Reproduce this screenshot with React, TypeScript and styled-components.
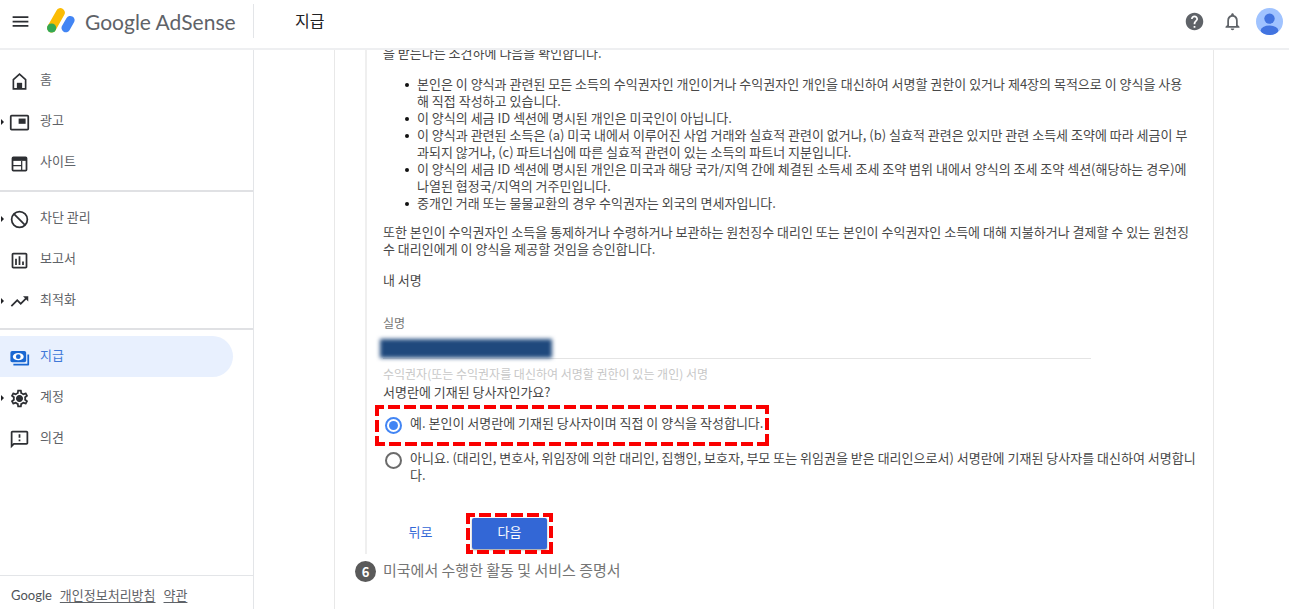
import React, { useState } from "react";
import styled, { createGlobalStyle } from "styled-components";
import {
  MdHelp,
  MdMenu,
  MdNotificationsNone,
  MdOutlineAssessment,
  MdOutlineFeedback,
  MdOutlineSettings,
  MdTrendingUp,
} from "react-icons/md";

const GlobalStyle = createGlobalStyle`
  *, *::before, *::after { box-sizing: border-box; }
  body {
    margin: 0;
    background: #fff;
    color: #484848;
    font: 13px/17px "Noto Sans CJK KR", Roboto, sans-serif;
  }
  button, input { font: inherit; }
  p, ul { margin: 0; }
`;

const Shell = styled.div`
  display: flex;
  flex-direction: column;
  height: 100vh;
`;

/* Top bar */

const Header = styled.header`
  display: flex;
  flex: none;
  height: 50px;
  border-bottom: 2px solid #eeeff1;
`;

const Brand = styled.div`
  display: flex;
  align-items: center;
  flex: none;
  width: 254px;
  height: 34px;
  margin-top: 4px;
  padding-left: 10px;
  border-right: 1px solid #e3e5e8;
`;

const IconButton = styled.button`
  display: flex;
  padding: 0;
  border: 0;
  background: none;
  color: ${(p) => p.color || "#5f6368"};
  cursor: pointer;
`;

const BrandLink = styled.a`
  display: flex;
  align-items: center;
  gap: 9px;
  margin-left: 15px;
  color: #5f6368;
  font: 21px/28px Lato, sans-serif;
  text-decoration: none;
  white-space: nowrap;
  span {
    padding-top: 2px;
  }
`;

const PageTitle = styled.h1`
  flex: 1;
  margin: 0;
  padding: 8px 0 0 41px;
  color: #202124;
  font-size: 16px;
  font-weight: 400;
  line-height: 24px;
`;

const HeaderActions = styled.div`
  display: flex;
  align-items: center;
  gap: 13px;
  height: 42px;
  padding-right: 6px;
`;

const ActionIcons = styled.div`
  display: flex;
  gap: 17px;
`;

/* Side navigation */

const Body = styled.div`
  display: flex;
  flex: 1;
  min-height: 0;
`;

const Sidebar = styled.aside`
  display: flex;
  flex-direction: column;
  flex: none;
  width: 254px;
  border-right: 1px solid #e3e5e8;
`;

const Nav = styled.nav`
  flex: 1;
  padding-top: 4px;
`;

const NavGroup = styled.div`
  padding: 6px 0 7px;
  & + & {
    border-top: 2px solid #e0e1e4;
  }
`;

const NavItem = styled.a<{ $active?: boolean }>`
  display: flex;
  align-items: center;
  height: 41px;
  margin-right: 20px;
  padding-bottom: 4px;
  border-radius: 0 21px 21px 0;
  background: ${(p) => (p.$active ? "#e8f0fe" : "transparent")};
  color: ${(p) => (p.$active ? "#3f78d8" : "#5f6368")};
  text-decoration: none;

  svg {
    flex: none;
    margin: 6px 10px 0 0;
    color: ${(p) => (p.$active ? "#1967d2" : "#2d2f33")};
  }
`;

const Caret = styled.span<{ $shown?: boolean }>`
  width: 9px;
  padding-left: 1px;
  &::before {
    content: "";
    display: ${(p) => (p.$shown ? "block" : "none")};
    width: 0;
    margin-top: 4px;
    border: solid transparent;
    border-width: 3px 0 3px 3px;
    border-left-color: #202124;
  }
`;

const SidebarFooter = styled.footer`
  display: flex;
  align-items: center;
  gap: 8px;
  height: 34px;
  padding: 3px 0 0 11px;
  border-top: 1px solid #e3e5e8;
  a {
    color: #5f6368;
    text-underline-offset: 2px;
  }
`;

const FooterBrand = styled.span`
  padding-top: 2px;
  color: #4f5358;
  font: 13px/17px Lato, sans-serif;
`;

/* Tax form */

const Main = styled.main`
  display: flex;
  flex: 1;
  min-width: 0;
  padding: 0 75px 0 80px;
  overflow: hidden;
`;

const Card = styled.section`
  flex: 1;
  padding: 0 22px 0 20px;
  border: solid #e8e8e8;
  border-width: 0 1px;
`;

const StepBody = styled.div`
  margin: -6px 0 0 10px;
  padding-left: 16px;
  border-left: 2px solid #efefef;
`;

const Paragraph = styled.p`
  margin-bottom: 14px;
`;

const Terms = styled.ul`
  margin-bottom: 12px;
  padding-left: 22px;
  list-style: none;
  li {
    display: flex;
    gap: 8px;
  }
  li::before {
    content: "";
    flex: none;
    width: 4px;
    height: 4px;
    margin-top: 8px;
    border-radius: 50%;
    background: #111;
  }
`;

const Field = styled.div`
  position: relative;
  display: flex;
  flex-direction: column;
  padding-top: 13px;
  font-size: 12px;
  line-height: 16px;
`;

const FieldLabel = styled.label`
  color: #757575;
`;

const TextInput = styled.input`
  width: calc(100% - 100px);
  height: 28px;
  padding: 6px 0 4px;
  border: 0;
  border-bottom: 1px solid #e4e4e4;
  outline: 0;
  background: none;
`;

const Redaction = styled.span`
  position: absolute;
  top: 37px;
  left: -3px;
  width: 172px;
  height: 19px;
  background: #1f497d;
  filter: blur(2px);
`;

const Hint = styled.p`
  margin: 7px 0 1px;
  color: #c8c8c8;
`;

const Options = styled.fieldset`
  display: grid;
  gap: 15px;
  min-width: 0;
  margin: 0 -8px 0 0;
  padding: 0;
  border: 0;
  legend {
    padding: 0 0 14px;
  }
`;

const Option = styled.label`
  position: relative;
  display: flex;
  align-items: flex-start;
  gap: 8px;
  padding-left: 2px;
`;

const Radio = styled.input`
  flex: none;
  display: grid;
  place-items: center;
  width: 17px;
  height: 17px;
  margin: 3px 0 0;
  appearance: none;
  border: 2px solid #6b6b6b;
  border-radius: 50%;
  &:checked {
    border-color: #4285f4;
  }
  &:checked::before {
    content: "";
    width: 9px;
    height: 9px;
    border-radius: 50%;
    background: #4285f4;
  }
`;

const Actions = styled.div`
  display: flex;
  align-items: center;
  gap: 14px;
  padding: 35px 0 5px;
`;

const Action = styled.button<{ $primary?: boolean }>`
  width: 75px;
  height: 31px;
  padding: 0 0 4px;
  border: 0;
  border-radius: 2px;
  background: ${(p) => (p.$primary ? "#3367d6" : "transparent")};
  box-shadow: ${(p) => (p.$primary ? "0 1px 2px rgba(0, 0, 0, 0.4)" : "none")};
  color: ${(p) => (p.$primary ? "#fff" : "#3367d6")};
  cursor: pointer;
`;

const Highlighted = styled.span`
  position: relative;
  display: flex;
`;

const Outline = styled.svg<{ $w: number; $h: number; $x: number; $y: number }>`
  position: absolute;
  left: ${(p) => p.$x}px;
  top: ${(p) => p.$y}px;
  width: ${(p) => p.$w}px;
  height: ${(p) => p.$h}px;
  pointer-events: none;
`;

const StepHeading = styled.h2`
  display: flex;
  gap: 7px;
  margin: 7px 0 0;
  color: #757575;
  font-size: 15px;
  font-weight: 400;
  line-height: 18px;
`;

const StepNumber = styled.span`
  width: 21px;
  height: 21px;
  border-radius: 50%;
  background: #5a5a5a;
  color: #fff;
  font-size: 13px;
  font-weight: 700;
  line-height: 21px;
  text-align: center;
`;

function DashedOutline({ w, h, x, y }: { w: number; h: number; x: number; y: number }) {
  return (
    <Outline $w={w} $h={h} $x={x} $y={y} aria-hidden="true">
      <path d={`M2 ${h - 2}V2`} fill="none" stroke="#fa0000" strokeWidth="4" strokeDasharray="12 4" strokeDashoffset="4" />
      <path d={`M0 2H${w}`} fill="none" stroke="#fa0000" strokeWidth="4" strokeDasharray="12 4" strokeDashoffset="3" />
      <path d={`M${w - 2} 0V${h}`} fill="none" stroke="#fa0000" strokeWidth="4" strokeDasharray="12 4" strokeDashoffset="3" />
      <path d={`M${w} ${h - 2}H0`} fill="none" stroke="#fa0000" strokeWidth="4" strokeDasharray="12 4" />
    </Outline>
  );
}

const AdSenseLogo = () => (
  <svg width="30" height="28" viewBox="0 0 30 28" aria-hidden="true" fill="none" strokeLinecap="round">
    <path d="M24.3 13.2 19.8 21" stroke="#4285f4" strokeWidth="8.6" />
    <path d="M14.4 5.6 5.7 21" stroke="#fbbc04" strokeWidth="9" />
    <circle cx="5.6" cy="21" r="4.6" fill="#34a853" />
  </svg>
);

const HomeIcon = () => (
  <svg width="21" height="21" viewBox="0 0 24 24" aria-hidden="true">
    <path d="M5 20.5V9.8l7-6.3 7 6.3v10.7Z" fill="none" stroke="currentColor" strokeWidth="1.9" />
    <path d="M9 20.5v-7h6v7Z" fill="currentColor" />
  </svg>
);

const AdsIcon = () => (
  <svg width="21" height="21" viewBox="0 0 24 24" aria-hidden="true">
    <rect x="2" y="4" width="20" height="16" rx="1" fill="none" stroke="currentColor" strokeWidth="2" />
    <path d="M11 7.5h8v6h-8Z" fill="currentColor" />
  </svg>
);

const SitesIcon = () => (
  <svg width="21" height="21" viewBox="0 0 24 24" aria-hidden="true">
    <rect x="4" y="5" width="16" height="15" rx="1" fill="none" stroke="currentColor" strokeWidth="2" />
    <path d="M4 5h16v4H4Z" fill="currentColor" />
    <path d="M4 14.5h10M14.5 9v11" stroke="currentColor" strokeWidth="1.4" />
  </svg>
);

const BlockIcon = () => (
  <svg width="21" height="21" viewBox="0 0 24 24" aria-hidden="true">
    <circle cx="12" cy="12" r="9" fill="none" stroke="currentColor" strokeWidth="2" />
    <path d="m5.6 5.6 12.8 12.8" stroke="currentColor" strokeWidth="2" />
  </svg>
);

const PaymentsIcon = () => (
  <svg width="21" height="21" viewBox="0 0 24 24" aria-hidden="true">
    <path d="M22 8.5v11.6H5" fill="none" stroke="currentColor" strokeWidth="2" strokeLinejoin="round" />
    <rect x="1.6" y="4.5" width="18" height="13" rx="2" fill="currentColor" />
    <ellipse cx="10.6" cy="11" rx="6.2" ry="4.1" fill="#fff" />
    <circle cx="10.6" cy="11" r="2.7" fill="currentColor" />
  </svg>
);

const SettingsIcon = () => (
  <svg width="21" height="21" viewBox="0 0 24 24" aria-hidden="true">
    <MdOutlineSettings size={24} style={{ margin: 0 }} />
    <circle cx="12" cy="12" r="3.4" fill="currentColor" />
  </svg>
);

const Avatar = () => (
  <svg width="27" height="27" viewBox="0 0 27 27" aria-hidden="true">
    <defs>
      <clipPath id="avatar-clip">
        <circle cx="13.5" cy="13.5" r="13.5" />
      </clipPath>
    </defs>
    <g clipPath="url(#avatar-clip)">
      <rect width="27" height="27" fill="#a0c3ff" />
      <circle cx="13.5" cy="10.6" r="5.2" fill="#4274e0" />
      <ellipse cx="13.5" cy="22.6" rx="8.8" ry="5" fill="#4274e0" />
    </g>
  </svg>
);

type Entry = { label: string; icon: React.ReactNode; expandable?: boolean; active?: boolean };

const navigation: Entry[][] = [
  [
    { label: "홈", icon: <HomeIcon /> },
    { label: "광고", icon: <AdsIcon />, expandable: true },
    { label: "사이트", icon: <SitesIcon /> },
  ],
  [
    { label: "차단 관리", icon: <BlockIcon />, expandable: true },
    { label: "보고서", icon: <MdOutlineAssessment size={21} /> },
    { label: "최적화", icon: <MdTrendingUp size={21} />, expandable: true },
  ],
  [
    { label: "지급", icon: <PaymentsIcon />, active: true },
    { label: "계정", icon: <SettingsIcon />, expandable: true },
    { label: "의견", icon: <MdOutlineFeedback size={21} /> },
  ],
];

const terms = [
  "본인은 이 양식과 관련된 모든 소득의 수익권자인 개인이거나 수익권자인 개인을 대신하여 서명할 권한이 있거나 제4장의 목적으로 이 양식을 사용해 직접 작성하고 있습니다.",
  "이 양식의 세금 ID 섹션에 명시된 개인은 미국인이 아닙니다.",
  "이 양식과 관련된 소득은 (a) 미국 내에서 이루어진 사업 거래와 실효적 관련이 없거나, (b) 실효적 관련은 있지만 관련 소득세 조약에 따라 세금이 부과되지 않거나, (c) 파트너십에 따른 실효적 관련이 있는 소득의 파트너 지분입니다.",
  "이 양식의 세금 ID 섹션에 명시된 개인은 미국과 해당 국가/지역 간에 체결된 소득세 조세 조약 범위 내에서 양식의 조세 조약 섹션(해당하는 경우)에 나열된 협정국/지역의 거주민입니다.",
  "중개인 거래 또는 물물교환의 경우 수익권자는 외국의 면세자입니다.",
];

export default function App() {
  const [signer, setSigner] = useState("self");

  return (
    <Shell>
      <GlobalStyle />
      <Header>
        <Brand>
          <IconButton aria-label="메뉴" color="#2d2f33">
            <MdMenu size={21} />
          </IconButton>
          <BrandLink href="#home">
            <AdSenseLogo />
            <span>Google AdSense</span>
          </BrandLink>
        </Brand>
        <PageTitle>지급</PageTitle>
        <HeaderActions>
          <ActionIcons>
            <IconButton aria-label="도움말">
              <MdHelp size={21} />
            </IconButton>
            <IconButton aria-label="알림">
              <MdNotificationsNone size={21} />
            </IconButton>
          </ActionIcons>
          <IconButton aria-label="프로필">
            <Avatar />
          </IconButton>
        </HeaderActions>
      </Header>
      <Body>
        <Sidebar>
          <Nav>
            {navigation.map((group, index) => (
              <NavGroup key={index}>
                {group.map((entry) => (
                  <NavItem key={entry.label} href="#" $active={entry.active}>
                    <Caret $shown={entry.expandable} />
                    {entry.icon}
                    {entry.label}
                  </NavItem>
                ))}
              </NavGroup>
            ))}
          </Nav>
          <SidebarFooter>
            <FooterBrand>Google</FooterBrand>
            <a href="#privacy">개인정보처리방침</a>
            <a href="#terms">약관</a>
          </SidebarFooter>
        </Sidebar>
        <Main>
          <Card>
            <StepBody>
              <Paragraph>을 받는다는 조건하에 다음을 확인합니다.</Paragraph>
              <Terms>
                {terms.map((term) => (
                  <li key={term}>{term}</li>
                ))}
              </Terms>
              <Paragraph>
                또한 본인이 수익권자인 소득을 통제하거나 수령하거나 보관하는 원천징수 대리인 또는 본인이 수익권자인 소득에 대해 지불하거나 결제할 수 있는 원천징수 대리인에게 이 양식을 제공할 것임을 승인합니다.
              </Paragraph>
              <Paragraph>내 서명</Paragraph>
              <Field>
                <FieldLabel htmlFor="legal-name">실명</FieldLabel>
                <TextInput id="legal-name" type="text" />
                <Redaction />
                <Hint>수익권자(또는 수익권자를 대신하여 서명할 권한이 있는 개인) 서명</Hint>
              </Field>
              <Options>
                <legend>서명란에 기재된 당사자인가요?</legend>
                <Option>
                  <Radio type="radio" name="signer" checked={signer === "self"} onChange={() => setSigner("self")} />
                  <span>예. 본인이 서명란에 기재된 당사자이며 직접 이 양식을 작성합니다.</span>
                  <DashedOutline w={394} h={41} x={-8} y={-9} />
                </Option>
                <Option>
                  <Radio type="radio" name="signer" checked={signer === "agent"} onChange={() => setSigner("agent")} />
                  <span>
                    아니요. (대리인, 변호사, 위임장에 의한 대리인, 집행인, 보호자, 부모 또는 위임권을 받은 대리인으로서) 서명란에 기재된 당사자를 대신하여 서명합니다.
                  </span>
                </Option>
              </Options>
              <Actions>
                <Action type="button">뒤로</Action>
                <Highlighted>
                  <Action type="button" $primary>
                    다음
                  </Action>
                  <DashedOutline w={87} h={41} x={-6} y={-5} />
                </Highlighted>
              </Actions>
            </StepBody>
            <StepHeading>
              <StepNumber>6</StepNumber>
              미국에서 수행한 활동 및 서비스 증명서
            </StepHeading>
          </Card>
        </Main>
      </Body>
    </Shell>
  );
}
